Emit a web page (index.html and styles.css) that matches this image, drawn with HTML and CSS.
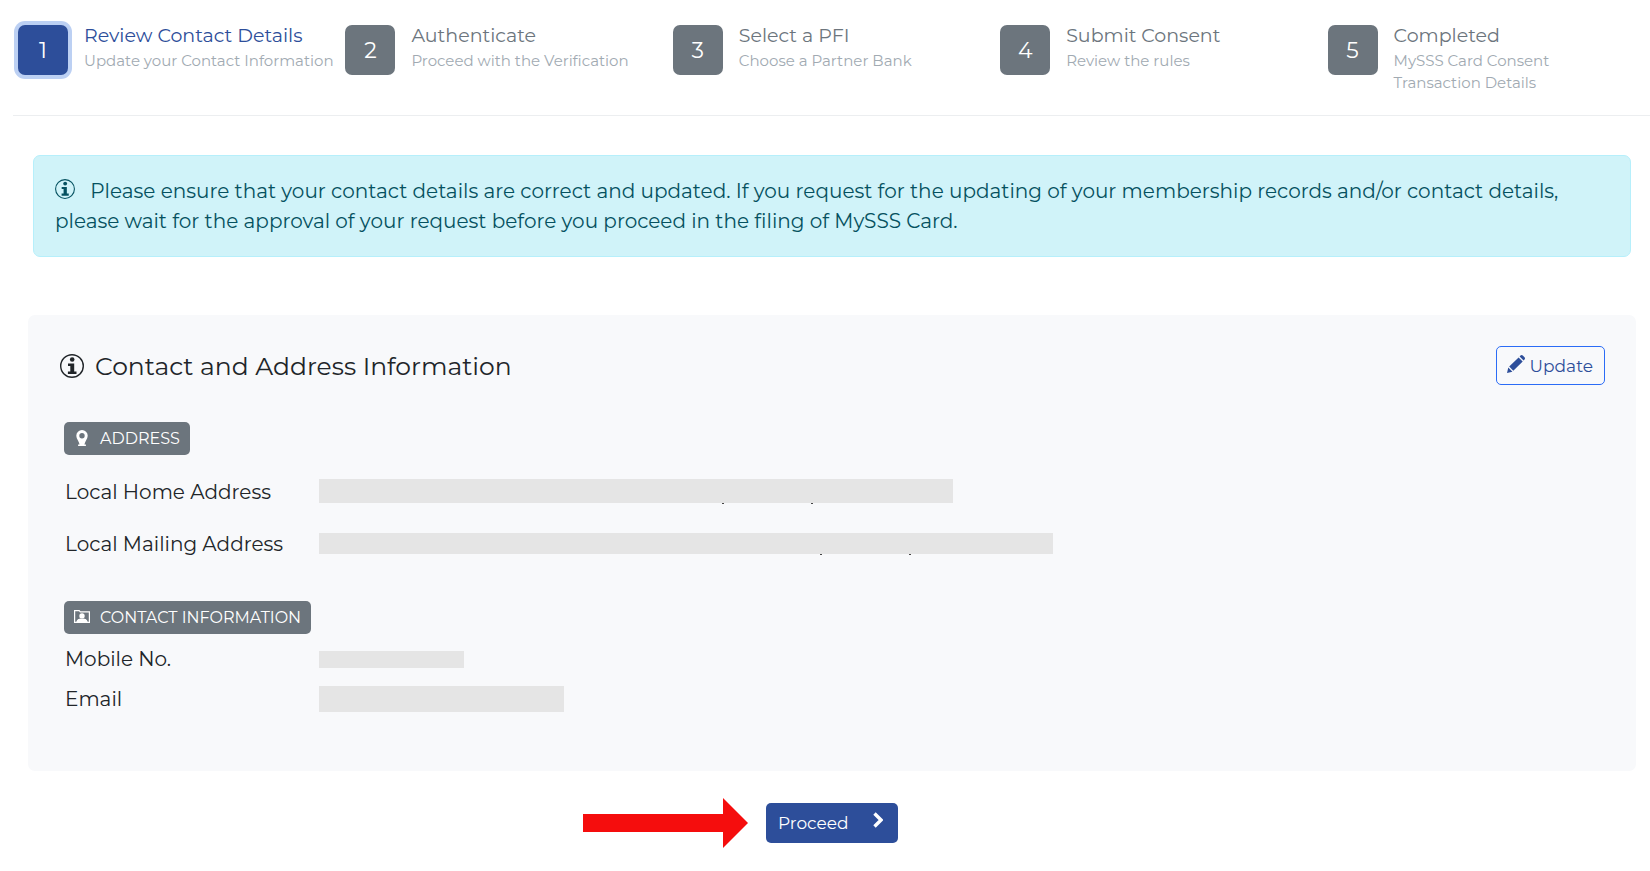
FILE: index.html
```
<!DOCTYPE html>
<html lang="en">
<head>
    <meta charset="UTF-8">
    <meta name="viewport" content="width=device-width, initial-scale=1.0">
    <title>MySSS Card</title>
    <link rel="stylesheet" href="styles.css">
</head>
<body>

    <nav class="stepper">
        <div class="step active">
            <button type="button" class="step-number">1</button>
            <div class="step-label">
                <div class="step-title">Review Contact Details</div>
                <div class="step-text">Update your Contact Information</div>
            </div>
        </div>
        <div class="step">
            <button type="button" class="step-number">2</button>
            <div class="step-label">
                <div class="step-title">Authenticate</div>
                <div class="step-text">Proceed with the Verification</div>
            </div>
        </div>
        <div class="step">
            <button type="button" class="step-number">3</button>
            <div class="step-label">
                <div class="step-title">Select a PFI</div>
                <div class="step-text">Choose a Partner Bank</div>
            </div>
        </div>
        <div class="step">
            <button type="button" class="step-number">4</button>
            <div class="step-label">
                <div class="step-title">Submit Consent</div>
                <div class="step-text">Review the rules</div>
            </div>
        </div>
        <div class="step">
            <button type="button" class="step-number">5</button>
            <div class="step-label">
                <div class="step-title">Completed</div>
                <div class="step-text">MySSS Card Consent<br>Transaction Details</div>
            </div>
        </div>
    </nav>

    <main>
        <div class="alert">
            <svg class="alert-icon" viewBox="0 0 24 24" fill="currentColor">
                <circle cx="12" cy="12" r="11.3" fill="none" stroke="currentColor" stroke-width="1.3"/>
                <circle cx="12.2" cy="5.5" r="2.3"/>
                <path d="M8 9.6h6.2v7.9h2.3v2.5H7.9v-2.5h2.4v-5.4H8z"/>
            </svg>
            Please ensure that your contact details are correct and updated. If you request for the updating of your membership records and/or contact details,
            please wait for the approval of your request before you proceed in the filing of MySSS Card.
        </div>

        <section class="card">
            <div class="card-header">
                <h2>
                    <svg class="title-icon" viewBox="0 0 24 24" fill="currentColor">
                        <circle cx="12" cy="12" r="11.3" fill="none" stroke="currentColor" stroke-width="1.4"/>
                        <circle cx="12.2" cy="5.5" r="2.3"/>
                        <path d="M8 9.6h6.2v7.9h2.3v2.5H7.9v-2.5h2.4v-5.4H8z"/>
                    </svg>
                    Contact and Address Information
                </h2>
                <button type="button" class="update-btn">
                    <svg class="pencil-icon" viewBox="0 0 18 18" fill="currentColor">
                        <path d="M0 18l1.3-5.4 4.1 4.1zM2.2 11.6L11.6 2.4l4.1 4.1-9.4 9.3zM12.6 1.5l.9-.9q1.1-1.1 2.3 0l1.7 1.7q1 1.1 0 2.2l-.9.9z"/>
                    </svg>
                    Update
                </button>
            </div>

            <div class="badge">
                <svg class="badge-icon" viewBox="0 0 16 16" fill="currentColor">
                    <path fill-rule="evenodd" d="M8 0a5.700 5.700 0 0 1 5.700 5.700c0 3.100-2.700 5.300-3.300 8.900h1.500V16H4.100v-1.400h1.500C5 11 2.300 8.800 2.300 5.700A5.700 5.700 0 0 1 8 0zM8 3a2.700 2.700 0 1 0 0 5.400A2.700 2.700 0 0 0 8 3z"/>
                    <path d="M7 11h2v4H7z"/>
                </svg>
                ADDRESS
            </div>
            <dl class="details address">
                <dt>Local Home Address</dt>
                <dd><span class="masked home"></span></dd>
                <dt>Local Mailing Address</dt>
                <dd><span class="masked mailing"></span></dd>
            </dl>

            <div class="badge">
                <svg class="badge-icon" viewBox="0 0 16 16" fill="currentColor">
                    <path fill-rule="evenodd" d="M0 1h5.500l1 1.300H16V14H0zM1.200 2.200v10.600h1.300c.3-1.900 1.600-2.600 3.500-3L8 11l2-1.200c1.900.4 3.200 1.100 3.500 3h1.300V3.500H6l-1-1.300z"/>
                    <circle cx="8" cy="6.900" r="2.700"/>
                    <path d="M2.500 13.300c.3-2.300 1.700-3.300 3.800-3.600h3.400c2.100.3 3.500 1.300 3.800 3.600z"/>
                </svg>
                CONTACT INFORMATION
            </div>
            <dl class="details contact">
                <dt>Mobile No.</dt>
                <dd><span class="masked mobile"></span></dd>
                <dt>Email</dt>
                <dd><span class="masked email"></span></dd>
            </dl>
        </section>

        <div class="actions">
            <svg class="arrow" viewBox="0 0 165 50">
                <path fill="#f50d0d" d="M0 16h140V0l25 25-25 25V34H0z"/>
            </svg>
            <button type="button" class="proceed-btn">
                Proceed
                <svg class="chevron" viewBox="0 0 10 16">
                    <path d="M1.500 1.500L8 8l-6.500 6.500" fill="none" stroke="currentColor" stroke-width="3.400"/>
                </svg>
            </button>
        </div>
    </main>

</body>
</html>
```
FILE: styles.css
```
* {
    box-sizing: border-box;
}

body {
    margin: 0;
    font-family: Montserrat, Inter, sans-serif;
    font-size: 20px;
    line-height: 30px;
    color: #212529;
    background-color: #fff;
}

button {
    font-family: inherit;
    cursor: pointer;
}

svg {
    flex-shrink: 0;
}

.stepper {
    display: grid;
    grid-template-columns: repeat(5, 1fr);
    height: 116px;
    margin-left: 13px;
    padding-top: 25px;
    border-bottom: 1px solid #eceef0;
}

.step {
    display: flex;
    align-items: flex-start;
    gap: 16px;
    padding-left: 5px;
    white-space: nowrap;
    color: #6c757d;
}

.step-number {
    width: 50px;
    height: 50px;
    padding: 0;
    border: none;
    border-radius: 7px;
    background-color: #6c757d;
    color: #fff;
    font-size: 22px;
}

.step-title {
    font-size: 19px;
    line-height: 22px;
}

.step-text {
    margin-top: 3px;
    font-size: 15px;
    line-height: 22px;
    color: #a1aab2;
}

.active .step-number {
    background-color: #2d4e9a;
    box-shadow: 0 0 0 4px #bcd0f3;
}

.active .step-title {
    color: #2d4e9a;
}

.alert {
    margin: 39px 19px 0 33px;
    padding: 20px 21px;
    border: 1px solid #b6effb;
    border-radius: 7px;
    background-color: #d0f3f9;
    color: #055160;
}

.alert-icon {
    width: 20px;
    height: 20px;
    margin-right: 10px;
    vertical-align: -1px;
}

.card {
    margin: 58px 14px 0 28px;
    padding: 31px 31px 52px 36px;
    border-radius: 7px;
    background-color: #f8f9fb;
}

.card-header {
    display: flex;
    justify-content: space-between;
    align-items: center;
    margin: 0 0 37px -4px;
}

h2 {
    display: flex;
    align-items: center;
    gap: 11px;
    margin: 0;
    font-size: 25px;
    font-weight: 400;
}

.title-icon {
    width: 24px;
    height: 24px;
}

.update-btn {
    display: flex;
    align-items: center;
    gap: 5px;
    height: 39px;
    padding: 0 11px 0 10px;
    border: 1px solid #2b6cf6;
    border-radius: 5px;
    background: none;
    color: #2d4e9a;
    font-size: 17px;
}

.pencil-icon {
    width: 18px;
    height: 18px;
    margin-bottom: 4px;
}

.badge {
    display: flex;
    align-items: center;
    gap: 10px;
    width: fit-content;
    height: 33px;
    padding: 0 10px;
    border-radius: 5px;
    background-color: #6c757d;
    color: #fff;
    font-size: 16px;
}

.badge-icon {
    width: 16px;
    height: 16px;
    margin-bottom: 2px;
}

.details {
    display: grid;
    grid-template-columns: 254px 1fr;
    align-items: center;
    margin: 0;
    padding-left: 1px;
}

.address {
    grid-auto-rows: 52px;
    margin: 11px 0 31px;
}

.contact {
    grid-auto-rows: 40px;
    margin-top: 5px;
}

dd {
    margin: 0;
}

.address dd {
    padding-bottom: 2px;
}

.masked {
    display: block;
    position: relative;
    background-color: #e5e5e5;
}

.home {
    width: 634px;
    height: 24px;
}

.mailing {
    width: 734px;
    height: 21px;
}

.mobile {
    width: 145px;
    height: 17px;
}

.email {
    width: 245px;
    height: 26px;
}

/* comma tails showing under the masked addresses */
.home::before,
.home::after,
.mailing::before,
.mailing::after {
    content: "";
    position: absolute;
    top: 100%;
    width: 2px;
    height: 1px;
    background-color: #444;
}

.home::before {
    left: 403px;
}

.home::after {
    left: 492px;
}

.mailing::before {
    left: 501px;
}

.mailing::after {
    left: 590px;
}

.actions {
    display: flex;
    justify-content: center;
    align-items: center;
    gap: 18px;
    margin-top: 27px;
    padding-right: 169px;
}

.arrow {
    width: 165px;
    height: 50px;
}

.proceed-btn {
    display: flex;
    justify-content: space-between;
    align-items: center;
    width: 132px;
    height: 40px;
    padding: 0 15px 0 12px;
    border: none;
    border-radius: 5px;
    background-color: #2d4e9a;
    color: #fff;
    font-size: 17px;
}

.chevron {
    width: 10px;
    height: 16px;
    margin-bottom: 6px;
}
```
